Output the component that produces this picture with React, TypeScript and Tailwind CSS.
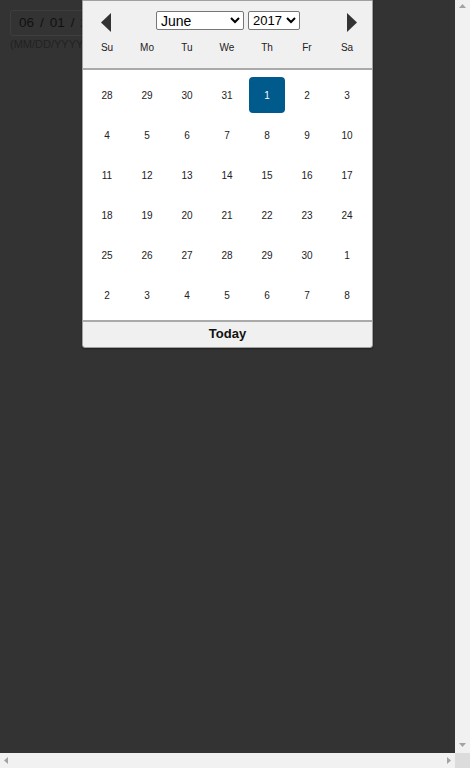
import React from 'react'

const weekdays = ['Su', 'Mo', 'Tu', 'We', 'Th', 'Fr', 'Sa']

const weeks: number[][] = [
  [28, 29, 30, 31, 1, 2, 3],
  [4, 5, 6, 7, 8, 9, 10],
  [11, 12, 13, 14, 15, 16, 17],
  [18, 19, 20, 21, 22, 23, 24],
  [25, 26, 27, 28, 29, 30, 1],
  [2, 3, 4, 5, 6, 7, 8],
]

const months = [
  'January', 'February', 'March', 'April', 'May', 'June',
  'July', 'August', 'September', 'October', 'November', 'December',
]

function Arrow({ dir }: { dir: 'left' | 'right' }) {
  return (
    <svg width="10" height="19" viewBox="0 0 10 19" className="shrink-0">
      {dir === 'left' ? (
        <polygon points="10,0 10,19 0,9.5" fill="#333" />
      ) : (
        <polygon points="0,0 0,19 10,9.5" fill="#333" />
      )}
    </svg>
  )
}

// small grey scrollbar arrow
function Tri({ dir }: { dir: 'up' | 'down' | 'left' | 'right' }) {
  const pts = {
    up: '0,4 7,4 3.5,0',
    down: '0,0 7,0 3.5,4',
    left: '4,0 4,7 0,3.5',
    right: '0,0 0,7 4,3.5',
  }[dir]
  const vert = dir === 'up' || dir === 'down'
  return (
    <svg width={vert ? 7 : 4} height={vert ? 4 : 7} viewBox={vert ? '0 0 7 4' : '0 0 4 7'}>
      <polygon points={pts} fill="#a3a3a3" />
    </svg>
  )
}

function Calendar() {
  return (
    <div className="absolute left-[82px] top-0 w-[291px] border border-[#a0a0a0] rounded-b-[3px] bg-[#f0f0f0] shadow-[0_1px_2px_rgba(0,0,0,0.4)] overflow-hidden">
      <div className="h-[67px]">
        <div className="flex items-center pt-[9px] h-[30px] pl-[18px]">
          <div className="mt-[3px]"><Arrow dir="left" /></div>
          <select
            defaultValue="June"
            className="ml-[45px] w-[88px] h-[19px] border border-[#767676] rounded-[2px] bg-white text-[14px] text-black leading-none"
          >
            {months.map((m) => (
              <option key={m}>{m}</option>
            ))}
          </select>
          <select
            defaultValue="2017"
            className="ml-[4px] w-[52px] h-[19px] border border-[#767676] rounded-[2px] bg-white text-[13px] text-black leading-none"
          >
            {[2015, 2016, 2017, 2018, 2019].map((y) => (
              <option key={y}>{y}</option>
            ))}
          </select>
          <div className="ml-[47px] mt-[3px]"><Arrow dir="right" /></div>
        </div>
        <div className="grid grid-cols-[repeat(7,40px)] px-[4px] mt-[10px]">
          {weekdays.map((d) => (
            <div key={d} className="text-center text-[10px] leading-[14px] text-[#222]">
              {d}
            </div>
          ))}
        </div>
      </div>
      <div className="border-t-2 border-[#aaa] bg-white px-[4px] py-[5px]">
        <div className="grid grid-cols-[repeat(7,40px)]">
          {weeks.flat().map((n, i) => {
            const sel = i === 4
            return (
              <div key={i} className="flex items-center justify-center h-[40px]">
                <div
                  className={
                    sel
                      ? 'flex items-center justify-center w-[36px] h-[36px] rounded-[4px] bg-[#005a8c] text-white text-[10px]'
                      : 'flex items-center justify-center w-[36px] h-[36px] text-[10px] text-[#222]'
                  }
                >
                  {n}
                </div>
              </div>
            )
          })}
        </div>
      </div>
      <div className="border-t-2 border-[#aaa] h-[27px] pb-[1px] flex items-center justify-center text-[13px] font-bold text-[#111]">
        Today
      </div>
    </div>
  )
}

export default function App() {
  return (
    <div className="flex flex-col w-[470px] h-[768px] font-['Liberation_Sans',Arial,sans-serif]">
      <div className="flex flex-1 min-h-0">
        <div className="relative flex-1 bg-[#333]">
          {/* date input */}
          <div className="pt-[10px] pl-[10px]">
            <div className="flex items-center h-[26px] w-[110px] border border-[#3e3e3e] rounded-[3px] pl-[8px] text-[13.5px] text-[#111]">
              <span>06</span>
              <span className="mx-[6px]">/</span>
              <span>01</span>
              <span className="mx-[6px]">/</span>
              <span>2017</span>
            </div>
            <div className="mt-[2px] text-[11px] text-[#222] leading-[13px]">(MM/DD/YYYY)</div>
          </div>
          <Calendar />
        </div>
        {/* vertical scrollbar */}
        <div className="w-[15px] bg-[#f1f1f1] flex flex-col justify-between items-center pt-[4px] pb-[6px]">
          <Tri dir="up" />
          <Tri dir="down" />
        </div>
      </div>
      {/* horizontal scrollbar */}
      <div className="flex h-[15px]">
        <div className="flex-1 bg-[#f1f1f1] flex items-center justify-between px-[4px]">
          <Tri dir="left" />
          <Tri dir="right" />
        </div>
        <div className="w-[15px] bg-[#dcdcdc]" />
      </div>
    </div>
  )
}
